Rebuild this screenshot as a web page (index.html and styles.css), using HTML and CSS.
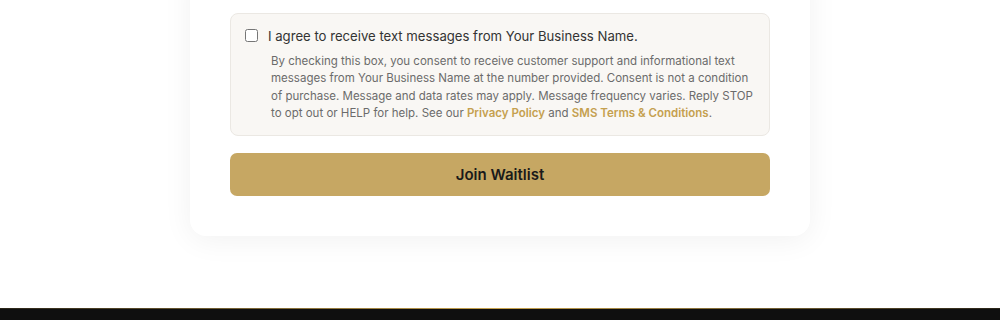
FILE: index.html
```html
<!DOCTYPE html>
<html lang="en">
<head>
<meta charset="utf-8">
<title>Join Waitlist</title>
<link rel="stylesheet" href="styles.css">
</head>
<body>
<main class="section">
  <form class="card">
    <div class="consent">
      <label class="consent-label">
        <input type="checkbox" class="consent-check">
        <span>I agree to receive text messages from Your Business Name.</span>
      </label>
      <p class="consent-fine">By checking this box, you consent to receive customer support and informational text messages from Your Business Name at the number provided. Consent is not a condition of purchase. Message and data rates may apply. Message frequency varies. Reply STOP to opt out or HELP for help. See our <a href="#" class="link">Privacy Policy</a> and <a href="#" class="link">SMS Terms &amp; Conditions</a>.</p>
    </div>
    <button type="button" class="btn">Join Waitlist</button>
  </form>
</main>
<footer class="footer"></footer>
</body>
</html>
```

FILE: styles.css
```css
* { box-sizing: border-box; }
html, body { margin: 0; padding: 0; background: #ffffff; }
body { font-family: Inter, "Noto Sans", sans-serif; color: #333; }

.section {
  display: flex;
  justify-content: center;
  padding-bottom: 72px;
}

.card {
  width: 620px;
  margin-top: -40px;
  padding: 53px 40px 40px;
  background: #ffffff;
  border-radius: 16px;
  box-shadow: 0 4px 30px rgba(0, 0, 0, 0.06);
  display: flex;
  flex-direction: column;
  gap: 17px;
}

.consent {
  background: #f9f7f4;
  border: 1px solid #ebe8e3;
  border-radius: 8px;
  padding: 12px 14px 12px 14px;
}

.consent-label {
  display: flex;
  align-items: center;
  gap: 10px;
  font-size: 13.15px;
  line-height: 20px;
  color: #333333;
  cursor: pointer;
}

.consent-check {
  margin: 0;
  width: 13px;
  height: 13px;
  flex: none;
  position: relative;
  top: -1px;
}

.consent-fine {
  margin: 7px 0 0;
  padding-left: 26px;
  font-size: 11.5px;
  line-height: 17.4px;
  color: #6b6b6b;
}

.link {
  color: #c5a04f;
  font-weight: 600;
  text-decoration: none;
}

.btn {
  height: 43px;
  border: none;
  border-radius: 7px;
  background: #c6a763;
  color: #1a1a1a;
  font-family: Inter, "Noto Sans", sans-serif;
  font-size: 15px;
  font-weight: 600;
  cursor: pointer;
}

.footer {
  height: 40px;
  background: #0f0f0f;
  border-top: 1px solid transparent;
  border-image: linear-gradient(90deg, rgba(197,160,79,0.15), #c9a44f 50%, rgba(197,160,79,0.15)) 1;
}
```
